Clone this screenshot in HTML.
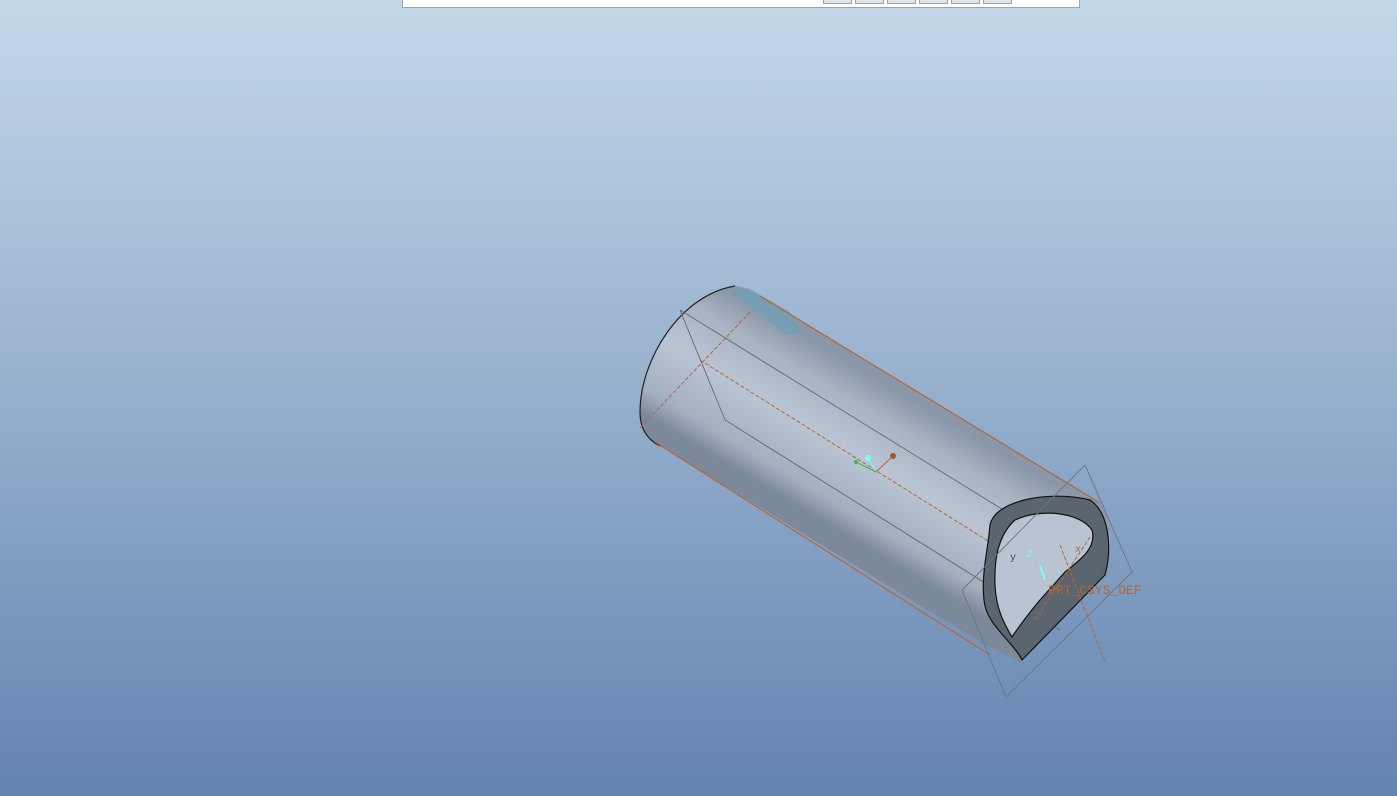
<!DOCTYPE html>
<html><head><meta charset="utf-8"><style>
html,body{margin:0;padding:0;width:1397px;height:796px;overflow:hidden}
body{background:linear-gradient(#c3d7e8 0%,#9fb7d3 40%,#6384b0 100%)}
.tb{position:absolute;left:402px;top:-1px;width:676px;height:7px;background:#fff;border:1px solid #9aa4b0}
.bt{position:absolute;top:0;width:27px;height:3px;background:#dde3ea;border:1px solid #9aa4b0;border-top:none}
svg{position:absolute;left:0;top:0}
</style></head><body>
<div class="tb">
<div class="bt" style="left:420px"></div><div class="bt" style="left:452px"></div><div class="bt" style="left:484px"></div><div class="bt" style="left:516px"></div><div class="bt" style="left:548px"></div><div class="bt" style="left:580px"></div>
</div>
<svg width="1397" height="796" viewBox="0 0 1397 796">
<defs>
<linearGradient id="g" x1="900" y1="393" x2="823" y2="522" gradientUnits="userSpaceOnUse">
<stop offset="0" stop-color="#8a97a8"/><stop offset="0.2" stop-color="#a7b3c3"/><stop offset="0.5" stop-color="#b9c5d4"/><stop offset="0.85" stop-color="#a3afbf"/><stop offset="1" stop-color="#7c899b"/>
</linearGradient>
</defs>
<path d="M735,286 C745,287 752,291 760,296 L1095,500 C1110,510 1115,540 1105,575 L1020,662 L985,645 L660,446 C648,440 640,430 640,412 C640,360 680,295 735,286 Z" fill="url(#g)"/>
<path d="M735,286 C680,295 640,360 640,412 C640,430 648,440 660,446" fill="none" stroke="#222" stroke-width="1.2"/>
<path d="M730,292 L748,288 L790,312 L800,334 L787,335 Z" fill="#6fa0b6" opacity="0.7"/>
<path d="M760,296 L1100,503 M655,442 L990,655" stroke="#b8652e" stroke-width="1.2"/>
<path d="M640,428 L752,310 M700,360 L1050,580" stroke="#b8652e" stroke-width="1" stroke-dasharray="4,2" fill="none"/>
<path d="M680,310 L1060,545 M680,310 L725,420 L1060,630" stroke="#666" stroke-width="0.9" fill="none"/>
<path d="M1022,660 C1012,640 986,625 984,600 C981,575 988,550 990,525 C995,500 1050,490 1090,500 C1108,512 1113,545 1105,575 Z" fill="#5a6570" stroke="#111" stroke-width="1.2"/>
<path d="M1012,637 C1005,625 996,610 995,585 C994,560 998,535 1015,520 C1040,508 1080,512 1092,530 C1097,548 1080,560 1065,572 L1040,600 C1030,612 1020,625 1012,637 Z" fill="#b8c4d2" stroke="#111" stroke-width="1.2"/>
<path d="M1085,465 L1132,572 L1006,697 L962,590 Z" fill="none" stroke="#6a7480" stroke-width="0.9"/>
<path d="M1060,545 L1105,662 M1035,620 L1090,537" stroke="#b8652e" stroke-width="1" stroke-dasharray="4,2"/>
<circle cx="868" cy="458" r="3" fill="#7ff"/><circle cx="893" cy="456" r="3" fill="#a0522d"/><circle cx="856" cy="462" r="2" fill="#3b5"/>
<path d="M876,472 L893,456" stroke="#b8652e" stroke-width="1" fill="none"/>
<path d="M868,458 L876,472" stroke="#7ff" stroke-width="1" fill="none"/>
<path d="M856,462 L876,472" stroke="#3b5" stroke-width="1" fill="none"/>
<path d="M1040,565 L1045,580" stroke="#7ff" stroke-width="2"/>
<text x="1048" y="594" font-family="Liberation Mono, monospace" font-size="13" fill="#b8652e">PRT_CSYS_DEF</text>
<text x="1010" y="560" font-family="Liberation Mono, monospace" font-size="10" fill="#444">y</text>
<text x="1027" y="557" font-family="Liberation Mono, monospace" font-size="10" fill="#7ff">Z</text>
<text x="1075" y="552" font-family="Liberation Mono, monospace" font-size="10" fill="#b8652e">x</text>
</svg>
</body></html>
